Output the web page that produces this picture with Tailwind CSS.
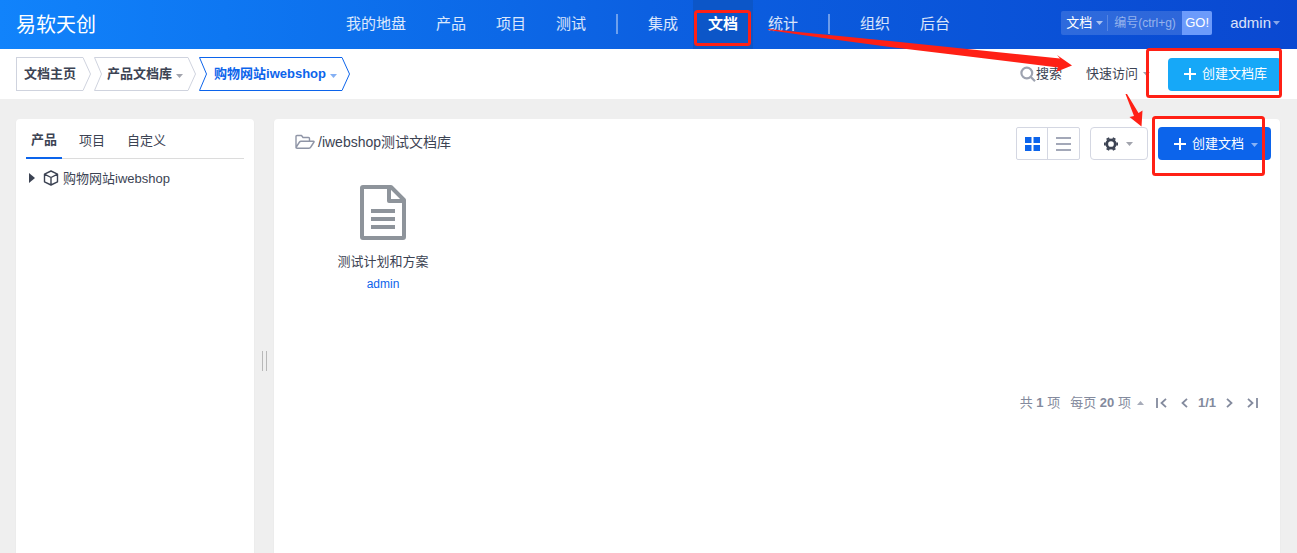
<!DOCTYPE html>
<html lang="zh-CN">
<head>
<meta charset="utf-8">
<meta name="viewport" content="width=device-width, initial-scale=1">
<title>文档</title>
<script src="https://cdn.jsdelivr.net/npm/@tailwindcss/browser@4"></script>
</head>
<body class="relative flex min-h-screen flex-col overflow-x-hidden bg-[#efefef] font-['Liberation_Sans','Noto_Sans_CJK_SC',sans-serif] text-[13px] leading-5 text-[#3c4353]">

<header class="grid h-[49px] grid-cols-[1fr_auto_1fr] items-center bg-linear-to-r from-[#1183fb] via-[#0c60e1] to-[#0a48d1] pr-[17px] pl-4 text-white">
  <h1 class="text-xl">易软天创</h1>
  <nav class="flex h-full items-center text-[15px] text-white/85">
    <a href="#" class="px-[15px] pb-0.5">我的地盘</a>
    <a href="#" class="px-[15px] pb-0.5">产品</a>
    <a href="#" class="px-[15px] pb-0.5">项目</a>
    <a href="#" class="px-[15px] pb-0.5">测试</a>
    <span class="mx-[15px] mb-0.5 h-5 w-0.5 bg-white/40"></span>
    <a href="#" class="px-[15px] pb-0.5">集成</a>
    <a href="#" aria-current="page" class="flex h-full items-center bg-[#0c56c8] px-[15px] pb-0.5 font-bold text-white">文档</a>
    <a href="#" class="px-[15px] pb-0.5">统计</a>
    <span class="mx-[15px] mb-0.5 h-5 w-0.5 bg-white/40"></span>
    <a href="#" class="px-[15px] pb-0.5">组织</a>
    <a href="#" class="px-[15px] pb-0.5">后台</a>
  </nav>
  <div class="flex items-center justify-end pb-[3px]">
    <form class="flex h-6 items-center overflow-hidden rounded-xs bg-white/15">
      <button type="button" class="flex h-full items-center gap-1 pr-1 pl-[5px]">文档
        <svg class="h-1 w-[7px] opacity-60" viewBox="0 0 7 4" fill="currentColor"><path d="M0 0h7L3.500 4z"/></svg>
      </button>
      <input type="text" aria-label="编号" placeholder="编号(ctrl+g)" class="h-4 w-[75px] border-l border-white/20 bg-transparent pl-1.5 text-xs outline-none placeholder:text-white/50">
      <button type="button" class="h-full w-[30px] bg-[#6c9bfb]">GO!</button>
    </form>
    <button type="button" class="ml-[18px] flex items-center gap-0.5 text-[15px] text-white/85">admin
      <svg class="h-1 w-[7px] opacity-60" viewBox="0 0 7 4" fill="currentColor"><path d="M0 0h7L3.500 4z"/></svg>
    </button>
  </div>
</header>

<div class="flex h-[50px] items-center justify-between bg-white px-4">
  <nav class="flex h-[34px] gap-[3px] font-bold" aria-label="位置">
    <a href="#" class="flex text-[#cfd3de]">
      <span class="flex items-center border-y border-l border-current px-[7px]"><span class="text-[#3c4353]">文档主页</span></span>
      <svg class="h-[34px] w-2" viewBox="0 0 8 34" fill="none" stroke="currentColor"><path d="M0 .5L7.500 17L0 33.500"/></svg>
    </a>
    <a href="#" class="flex text-[#cfd3de]">
      <svg class="h-[34px] w-2" viewBox="0 0 8 34" fill="none" stroke="currentColor"><path d="M8 .5H.5L7.500 17L.5 33.500H8"/></svg>
      <span class="flex items-center gap-1 border-y border-current px-[5px]"><span class="text-[#3c4353]">产品文档库</span>
        <svg class="mt-1 h-1 w-[7px] text-[#a2a4ad]" viewBox="0 0 7 4" fill="currentColor"><path d="M0 0h7L3.500 4z"/></svg></span>
      <svg class="h-[34px] w-2" viewBox="0 0 8 34" fill="none" stroke="currentColor"><path d="M0 .5L7.500 17L0 33.500"/></svg>
    </a>
    <a href="#" class="flex text-[#0c64eb]">
      <svg class="h-[34px] w-2" viewBox="0 0 8 34" fill="none" stroke="currentColor"><path d="M8 .5H.5L7.500 17L.5 33.500H8"/></svg>
      <span class="flex items-center gap-1 border-y border-current pr-[5px] pl-[7px]">购物网站iwebshop
        <svg class="mt-1 h-1 w-[7px] opacity-50" viewBox="0 0 7 4" fill="currentColor"><path d="M0 0h7L3.500 4z"/></svg></span>
      <svg class="h-[34px] w-2" viewBox="0 0 8 34" fill="none" stroke="currentColor"><path d="M0 .5L7.500 17L0 33.500"/></svg>
    </a>
  </nav>
  <div class="flex items-center">
    <a href="#" class="flex items-center">
      <svg class="size-4" viewBox="0 0 16 16" fill="none" stroke="#9ea3b0" stroke-width="2.200"><circle cx="6.800" cy="7" r="5.400"/><path d="M10.800 11l4.200 4.200"/></svg>搜索</a>
    <button type="button" class="ml-6 flex items-center gap-[5px]">快速访问
      <svg class="h-1 w-[7px] text-[#a2a4ad]" viewBox="0 0 7 4" fill="currentColor"><path d="M0 0h7L3.500 4z"/></svg>
    </button>
    <button type="button" class="ml-[18px] flex h-[33px] items-center gap-1 rounded-sm bg-[#16a8f8] px-3.5 text-white">
      <svg class="size-4" viewBox="0 0 16 16" stroke="currentColor" stroke-width="2"><path d="M8 2v12M2 8h12"/></svg>创建文档库</button>
  </div>
</div>

<main class="flex grow pt-5 pr-[17px] pl-4">
  <aside class="w-[238px] shrink-0 rounded-t-sm bg-white px-2.5 shadow-xs">
    <div class="flex h-10 gap-3 border-b border-[#dcdcdc]">
      <button type="button" class="-mb-px border-b-2 border-[#0c64eb] px-[5px] pt-1 font-bold">产品</button>
      <button type="button" class="px-[5px] pt-1">项目</button>
      <button type="button" class="px-[5px] pt-1">自定义</button>
    </div>
    <a href="#" class="mt-2 flex items-center pl-[3px]">
      <svg class="mr-2 h-2.5 w-[6px]" viewBox="0 0 6 10" fill="currentColor"><path d="M0 0l6 5l-6 5z"/></svg>
      <svg class="mr-1 size-4" viewBox="0 0 16 16" fill="none" stroke="currentColor" stroke-width="1.400" stroke-linejoin="round"><path d="M8 1l6.500 3.200v7.600L8 15l-6.500-3.200V4.200zM1.500 4.200L8 7.500l6.500-3.300M8 7.500V15"/></svg>
      <span class="pt-0.5">购物网站iwebshop</span>
    </a>
  </aside>
  <div class="flex w-5 shrink-0 justify-center pt-[232px]"><span class="h-5 w-[5px] border-x border-[#b8b8b8]"></span></div>
  <section class="min-w-0 grow rounded-t-sm bg-white shadow-xs">
    <div class="flex items-center justify-between py-2 pr-[9px] pl-[21px]">
      <h2 class="flex items-center gap-[3px] pb-[3px] text-sm">
        <svg class="h-4 w-5" viewBox="0 0 20 16" fill="none" stroke="#8f95a6" stroke-width="1.400" stroke-linejoin="round"><path d="M1 13.500V2.500Q1 1.500 2 1.500H6.500L8 3.500H13.500Q14.500 3.500 14.500 4.500V7M1 13.500L4.500 8Q5 7.200 6 7.200H18.500Q19.300 7.200 19 8L15.800 13Q15.200 14.200 14 14.200H2Q1 14.200 1 13.500Z"/></svg>
        /iwebshop测试文档库</h2>
      <div class="flex items-center gap-2.5">
        <div class="flex h-[33px] w-16 overflow-hidden rounded-xs border border-[#d4d7e2]">
          <button type="button" aria-label="卡片视图" class="flex flex-1 items-center justify-center border-r border-[#d4d7e2]"><svg class="h-3.5 w-[15px]" viewBox="0 0 15 14" fill="#0c64eb"><path d="M0 0h6.500v6H0zM8.500 0h6.500v6H8.500zM0 8h6.500v6H0zM8.500 8h6.500v6H8.500z"/></svg></button>
          <button type="button" aria-label="列表视图" class="flex flex-1 items-center justify-center"><svg class="h-3.5 w-[15px]" viewBox="0 0 15 14" fill="#a3a8b8"><path d="M0 0h15v2H0zM0 6h15v2H0zM0 12h15v2H0z"/></svg></button>
        </div>
        <button type="button" aria-label="设置" class="flex h-[33px] w-[58px] items-center justify-center gap-2 rounded-sm border border-[#d4d7e2]">
          <svg class="size-3.5" viewBox="0 0 14 14" fill="none"><circle cx="7" cy="7" r="4.200" stroke="#3c4353" stroke-width="2.700"/><path d="M12.200 7h1.800M9.600 11.500l.9 1.500M4.400 11.500l-.9 1.500M1.800 7H0M4.400 2.500l-.9-1.500M9.600 2.500l.9-1.500" stroke="#3c4353" stroke-width="3.200"/></svg>
          <svg class="h-1 w-[7px] text-[#a2a4ad]" viewBox="0 0 7 4" fill="currentColor"><path d="M0 0h7L3.500 4z"/></svg>
        </button>
        <button type="button" class="flex h-[33px] items-center rounded-sm bg-[#0c64eb] pr-[13px] pl-3.5 text-white">
          <svg class="mr-1 size-4" viewBox="0 0 16 16" stroke="currentColor" stroke-width="2"><path d="M8 2v12M2 8h12"/></svg>创建文档
          <svg class="mt-0.5 ml-[7px] h-1 w-[7px] opacity-50" viewBox="0 0 7 4" fill="currentColor"><path d="M0 0h7L3.500 4z"/></svg>
        </button>
      </div>
    </div>
    <a href="#" class="mt-4 ml-5 flex w-[178px] flex-col items-center">
      <svg class="h-[56px] w-12" viewBox="0 0 48 56" fill="none" stroke="#8e949b" stroke-width="4" stroke-linejoin="round"><path d="M4 3H32L45 16V53Q45 54 44 54H4Q3 54 3 53V4Q3 3 4 3Z"/><path d="M30 3V17H45"/><path d="M12 27H36M12 35H36M12 43H36" stroke-width="4"/></svg>
      <span class="mt-3">测试计划和方案</span>
      <span class="mt-1 text-xs text-[#0c64eb]">admin</span>
    </a>
    <div class="mt-[101px] flex items-center justify-end pr-[22px] text-[#838a9d]">
      <span>共 <b>1</b> 项</span>
      <button type="button" class="ml-2.5 flex items-center gap-1.5"><span>每页 <b>20</b> 项</span>
        <svg class="h-1 w-[7px] opacity-70" viewBox="0 0 7 4" fill="currentColor"><path d="M0 4h7L3.500 0z"/></svg></button>
      <button type="button" aria-label="首页" class="ml-3"><svg class="h-2.5 w-[11px]" viewBox="0 0 11 10" fill="none" stroke="currentColor" stroke-width="1.800"><path d="M1 0v10M10 .8L5.500 5L10 9.200"/></svg></button>
      <button type="button" aria-label="上一页" class="ml-3.5"><svg class="h-2.5 w-[7px]" viewBox="0 0 7 10" fill="none" stroke="currentColor" stroke-width="1.800"><path d="M6 .8L1.500 5L6 9.200"/></svg></button>
      <b class="ml-2.5">1/1</b>
      <button type="button" aria-label="下一页" class="ml-2.5"><svg class="h-2.5 w-[7px]" viewBox="0 0 7 10" fill="none" stroke="currentColor" stroke-width="1.800"><path d="M1 .8L5.500 5L1 9.200"/></svg></button>
      <button type="button" aria-label="末页" class="ml-3.5"><svg class="h-2.5 w-[11px]" viewBox="0 0 11 10" fill="none" stroke="currentColor" stroke-width="1.800"><path d="M10 0v10M1 .8L5.500 5L1 9.200"/></svg></button>
    </div>
  </section>
</main>

<!-- Red guide marks over the page -->
<svg class="pointer-events-none absolute top-0 left-0 h-[180px] w-[1297px]" viewBox="0 0 1297 180" fill="none" aria-hidden="true">
  <g stroke="#ff2015" stroke-width="3">
    <rect x="695.500" y="11.500" width="54" height="33" rx="2"/>
    <rect x="1147.500" y="49.500" width="133" height="47" rx="2"/>
    <rect x="1153.500" y="117.500" width="110" height="57" rx="2"/>
  </g>
  <g fill="#ff2015">
    <path d="M768 29L890 41L1060 58.500L1057 55L1072 65.500L1056 72L1058 67.500L973 57L890 47L823 38L768 30Z"/>
    <path d="M1125.500 94L1127 94L1138.500 113L1142.500 110.500L1141.500 126.500L1129.500 117L1134 116Z"/>
  </g>
</svg>
</body>
</html>
